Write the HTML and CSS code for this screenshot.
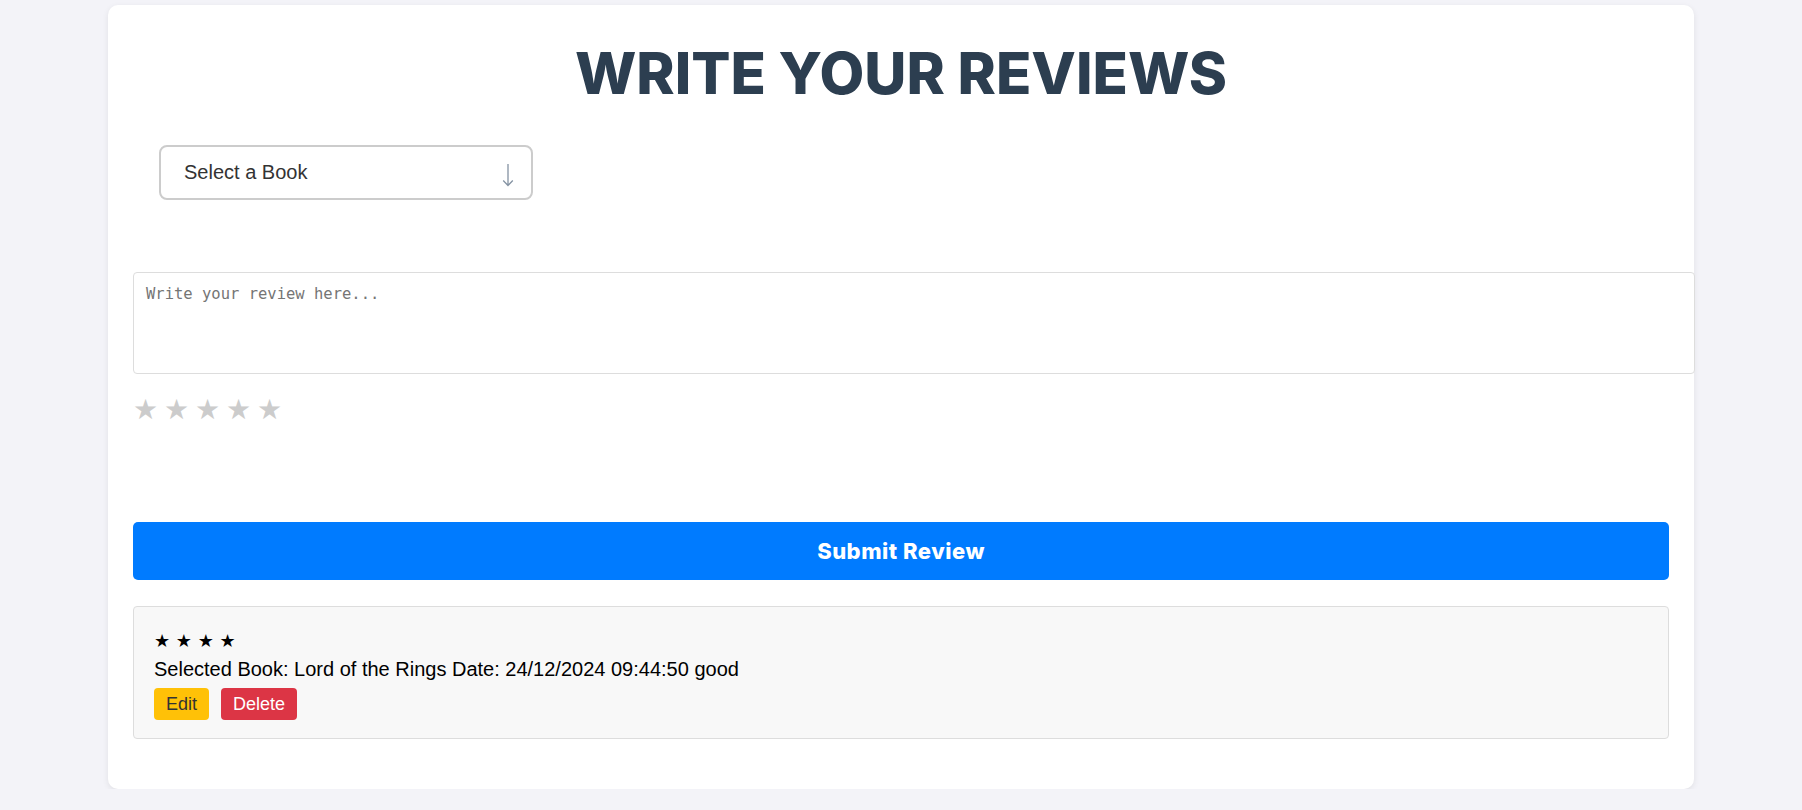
FILE: index.html
```html
<!DOCTYPE html>
<html lang="en">
<head>
<meta charset="utf-8">
<title>Write Your Reviews</title>
<link rel="stylesheet" href="styles.css">
</head>
<body>
<div class="page">
  <main class="card">
    <h1 class="title">WRITE YOUR REVIEWS</h1>
    <div class="select-wrap">
      <div class="select-box">
        <select class="book-select">
          <option>Select a Book</option>
          <option>Lord of the Rings</option>
        </select>
        <svg class="select-arrow" width="12" height="24" viewBox="0 0 12 24" aria-hidden="true">
          <path d="M6 1 V22.5 M1.2 17.5 L6 22.5 L10.8 17.5" fill="none" stroke="#8593a3" stroke-width="1.3"/>
        </svg>
      </div>
    </div>
    <textarea class="review-input" placeholder="Write your review here..."></textarea>
    <div class="rating">
      <span class="star">★</span><span class="star">★</span><span class="star">★</span><span class="star">★</span><span class="star">★</span>
    </div>
    <button class="submit-btn">Submit Review</button>
    <div class="review">
      <div class="review-stars">★ ★ ★ ★</div>
      <p class="review-text">Selected Book: Lord of the Rings Date: 24/12/2024 09:44:50 good</p>
      <div class="review-actions">
        <button class="btn btn-edit">Edit</button>
        <button class="btn btn-delete">Delete</button>
      </div>
    </div>
  </main>
</div>
</body>
</html>
```
FILE: styles.css
```css
* { box-sizing: border-box; }
html, body { margin: 0; padding: 0; }
body {
  background: #f3f3f8;
  font-family: "Liberation Sans", Arial, sans-serif;
  color: #000;
}
.page {
  padding-top: 5px;
}
.card {
  width: 1586px;
  margin: 0 auto;
  background: #fff;
  border-radius: 10px;
  box-shadow: 0 2px 6px rgba(0, 0, 0, 0.08);
  padding: 25px 25px 25px;
}
.title {
  margin: 9px 0 0;
  text-align: center;
  font-family: Inter, "Open Sans", sans-serif;
  font-weight: 800;
  font-size: 58px;
  line-height: 69.6px;
  color: #2c3e50;
}
.select-wrap {
  margin-top: 36px;
  padding-left: 26px;
}
.select-box {
  position: relative;
  width: 374px;
}
.book-select {
  -webkit-appearance: none;
  appearance: none;
  display: block;
  width: 374px;
  height: 55px;
  padding: 0 23px;
  border: 2px solid #cccccc;
  border-radius: 8px;
  background: #fff;
  font-family: "Liberation Sans", Arial, sans-serif;
  font-size: 20px;
  color: #333;
  outline: none;
}
.select-arrow {
  position: absolute;
  right: 19px;
  top: 18px;
  pointer-events: none;
}
.review-input {
  display: block;
  box-sizing: content-box;
  width: 100%;
  height: 76px;
  margin-top: 72px;
  padding: 12px;
  border: 1px solid #dddddd;
  border-radius: 4px;
  font-family: "DejaVu Sans Mono", "Liberation Mono", monospace;
  font-size: 15.5px;
  resize: none;
  outline: none;
}
.review-input::placeholder {
  color: #757575;
}
.rating {
  display: flex;
  margin-top: 18px;
  height: 36px;
  align-items: center;
}
.star {
  width: 31px;
  font-family: "DejaVu Sans", sans-serif;
  font-size: 28px;
  line-height: 1;
  color: #cccccc;
}
.submit-btn {
  display: block;
  width: 100%;
  height: 58px;
  margin-top: 94px;
  border: none;
  border-radius: 5px;
  background: #007bff;
  color: #fff;
  font-family: Inter, "Open Sans", sans-serif;
  font-weight: 800;
  font-size: 22px;
  letter-spacing: 0.5px;
}
.review {
  margin-top: 26px;
  margin-bottom: 25px;
  padding: 20px 20px 18px;
  background: #f8f8f8;
  border: 1px solid #dddddd;
  border-radius: 4px;
}
.review-stars {
  font-family: "DejaVu Sans", sans-serif;
  font-size: 18px;
  line-height: 28px;
  color: #000;
}
.review-text {
  margin: 3px 0 0;
  font-size: 20px;
  line-height: 23px;
}
.review-actions {
  display: flex;
  gap: 12px;
  margin-top: 7px;
}
.btn {
  border: none;
  border-radius: 4px;
  padding: 6px 12px;
  font-family: "Liberation Sans", Arial, sans-serif;
  font-size: 18px;
  line-height: 20.7px;
}
.btn-edit {
  background: #ffc107;
  color: #333;
}
.btn-delete {
  background: #dc3545;
  color: #fff;
}
```
